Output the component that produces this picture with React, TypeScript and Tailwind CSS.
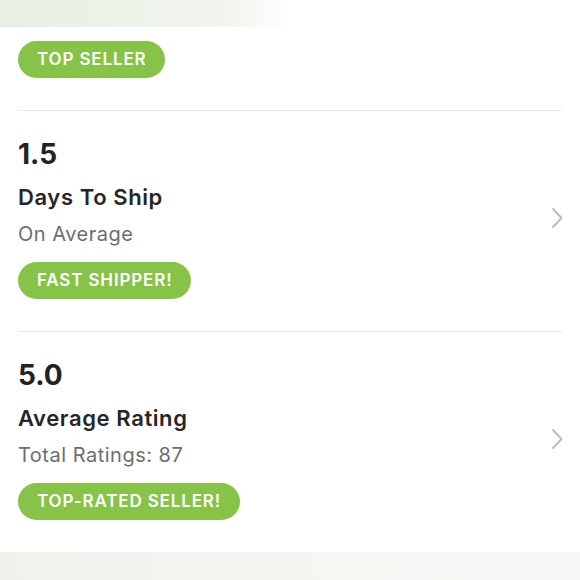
import React from 'react';

const stats = [
  { value: '1.5', title: 'Days To Ship', sub: 'On Average', badge: 'FAST SHIPPER!' },
  { value: '5.0', title: 'Average Rating', sub: 'Total Ratings: 87', badge: 'TOP-RATED SELLER!' },
];

function Badge({ label }: { label: string }) {
  return (
    <span className="inline-flex h-[37px] items-center rounded-full bg-[#86c348] px-[19px] text-[17px] font-semibold tracking-[0.05em] text-white">
      {label}
    </span>
  );
}

function Chevron() {
  return (
    <svg width="14" height="22" viewBox="0 0 14 22" fill="none" className="shrink-0">
      <path d="M3 2l8.5 9L3 20" stroke="#bdbdbd" strokeWidth="2" strokeLinecap="round" strokeLinejoin="round" />
    </svg>
  );
}

export default function App() {
  return (
    <div className="flex h-[580px] w-[580px] flex-col overflow-hidden bg-white font-['Inter','Noto_Sans',sans-serif]">
      <div className="h-[27px] shrink-0 bg-gradient-to-r from-[#e9efe4] via-[#f1f5ee] via-40% to-white to-50%" />

      <div className="mx-[18px] border-b border-[#ebebeb] pb-[32px] pt-[14px]">
        <Badge label="TOP SELLER" />
      </div>

      {stats.map((s, i) => (
        <div
          key={s.value}
          className={`mx-[18px] flex items-center justify-between pt-[26px] pb-[32px] ${i === 0 ? 'border-b border-[#ebebeb]' : ''}`}
        >
          <div className="flex flex-col items-start">
            <div className="text-[28px] font-bold leading-[34px] text-[#222]">{s.value}</div>
            <div className="mt-[11px] text-[22px] font-semibold leading-[30px] tracking-[0.6px] text-[#262626]">{s.title}</div>
            <div className="mt-[9px] text-[20px] leading-[26px] tracking-[0.5px] text-[#6e6e6e]">{s.sub}</div>
            <div className="mt-[15px]">
              <Badge label={s.badge} />
            </div>
          </div>
          <div className="mr-[-2px]">
            <Chevron />
          </div>
        </div>
      ))}

      <div className="flex-1 bg-gradient-to-r from-[#eef2ea] via-[#f5f6f2] to-[#f8f7f6]" />
    </div>
  );
}
